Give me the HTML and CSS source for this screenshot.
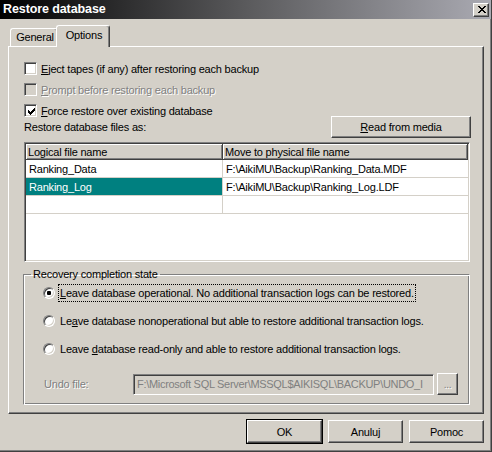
FILE: index.html
```html
<!DOCTYPE html>
<html>
<head>
<meta charset="utf-8">
<title>Restore database</title>
<link rel="stylesheet" href="styles.css">
</head>
<body>
<div class="window">
  <div class="titlebar">
    <span class="title">Restore database</span>
    <span class="close"><svg width="8" height="7" viewBox="0 0 8 7"><path d="M0 0h2v1H0zM6 0h2v1H6zM1 1h2v1H1zM5 1h2v1H5zM2 2h4v1H2zM3 3h2v1H3zM2 4h4v1H2zM1 5h2v1H1zM5 5h2v1H5zM0 6h2v1H0zM6 6h2v1H6z" fill="#000"/></svg></span>
  </div>
  <div class="tabs">
    <div class="tab">General</div>
    <div class="tab active">Options</div>
  </div>
  <div class="panel">
    <div class="check"><span class="box"></span><span><u>E</u>ject tapes (if any) after restoring each backup</span></div>
    <div class="check disabled"><span class="box"></span><span><u>P</u>rompt before restoring each backup</span></div>
    <div class="check"><span class="box"><svg width="7" height="7" viewBox="0 0 7 7"><path d="M6 0h1v1H6zM5 1h2v1H5zM0 2h1v1H0zM4 2h3v1H4zM0 3h2v1H0zM3 3h3v1H3zM0 4h5v1H0zM1 5h3v1H1zM2 6h1v1H2z" fill="#000"/></svg></span><span><u>F</u>orce restore over existing database</span></div>
    <div class="files-row">
      <span>Restore database files as:</span>
      <span class="btn read"><u>R</u>ead from media</span>
    </div>
    <div class="grid">
      <table>
        <colgroup><col class="c1"><col></colgroup>
        <tr><th>Logical file name</th><th>Move to physical file name</th></tr>
        <tr><td>Ranking_Data</td><td>F:\AikiMU\Backup\Ranking_Data.MDF</td></tr>
        <tr><td class="sel">Ranking_Log</td><td>F:\AikiMU\Backup\Ranking_Log.LDF</td></tr>
        <tr><td></td><td></td></tr>
      </table>
    </div>
    <fieldset class="group">
      <legend>Recovery completion state</legend>
      <div class="radio"><span class="dot on"><i></i></span><span class="focus"><u>L</u>eave database operational. No additional transaction logs can be restored.</span></div>
      <div class="radio"><span class="dot"></span><span>Le<u>a</u>ve database nonoperational but able to restore additional transaction logs.</span></div>
      <div class="radio"><span class="dot"></span><span>Leave <u>d</u>atabase read-only and able to restore additional transaction logs.</span></div>
      <div class="undo">
        <span class="undo-label">Undo file:</span>
        <span class="input"><span class="input-text">F:\Microsoft SQL Server\MSSQL$AIKISQL\BACKUP\UNDO_I</span></span>
        <span class="btn small">...</span>
      </div>
    </fieldset>
  </div>
  <div class="buttons">
    <span class="btn default">OK</span>
    <span class="btn">Anuluj</span>
    <span class="btn">Pomoc</span>
  </div>
</div>
</body>
</html>
```
FILE: styles.css
```css
* { box-sizing: border-box; }
html, body { margin: 0; padding: 0; }
body {
  width: 492px;
  height: 452px;
  overflow: hidden;
  background: #d4d0c8;
  font-family: "Liberation Sans", Arial, sans-serif;
  font-size: 11px;
  letter-spacing: -0.2px;
  color: #000;
}
.window {
  width: 492px;
  height: 452px;
  display: flex;
  flex-direction: column;
  border-right: 1px solid #404040;
  border-bottom: 1px solid #404040;
  box-shadow: inset -1px -1px #808080;
}
.titlebar {
  height: 19px;
  flex: none;
  display: flex;
  align-items: center;
  justify-content: space-between;
  background: linear-gradient(to right, #000 0%, #5a5a5c 50%, #aaaab2 100%);
  padding: 0 2px 0 3px;
}
.title {
  color: #fff;
  font-weight: bold;
  font-size: 12.5px;
  letter-spacing: -0.1px;
  line-height: 19px;
}
.close {
  width: 16px;
  height: 14px;
  display: flex;
  align-items: center;
  justify-content: center;
  background: #d4d0c8;
  border: 1px solid;
  border-color: #fff #404040 #404040 #fff;
  box-shadow: inset -1px -1px #808080;
  padding-left: 1px;
}
.tabs {
  height: 27px;
  flex: none;
  display: flex;
  align-items: flex-end;
  padding-left: 10px;
}
.tab {
  height: 18px;
  width: 48px;
  border: 1px solid;
  border-color: #fff #404040 transparent #fff;
  border-bottom: none;
  border-radius: 3px 3px 0 0;
  box-shadow: inset -1px 0 #808080;
  text-align: center;
  line-height: 17px;
  padding-left: 2px;
}
.tab.active {
  position: relative;
  z-index: 1;
  height: 22px;
  width: 54px;
  margin-left: -2px;
  margin-bottom: -1px;
  background: #d4d0c8;
  line-height: 18px;
}
.panel {
  margin-left: 8px;
  width: 476px;
  height: 368px;
  flex: none;
  border: 1px solid;
  border-color: #fff #404040 #404040 #fff;
  box-shadow: inset -1px -1px #808080;
  padding: 11px 12px 0 15px;
  display: flex;
  flex-direction: column;
}
.check {
  height: 21px;
  display: flex;
  align-items: center;
  gap: 4px;
}
.box {
  width: 13px;
  height: 13px;
  flex: none;
  background: #fff;
  border: 1px solid;
  border-color: #808080 #fff #fff #808080;
  box-shadow: inset 1px 1px #404040, inset -1px -1px #d4d0c8;
  display: flex;
  align-items: center;
  justify-content: center;
  padding: 1px 0 0 1px;
}
.disabled { color: #808080; text-shadow: 1px 1px 0 #fff; }
.disabled .box { background: #d4d0c8; }
.files-row {
  margin-top: -5px;
  height: 22px;
  display: flex;
  align-items: center;
  justify-content: space-between;
}
.btn {
  display: flex;
  align-items: center;
  justify-content: center;
  width: 75px;
  height: 23px;
  background: #d4d0c8;
  border: 1px solid;
  border-color: #fff #404040 #404040 #fff;
  box-shadow: inset -1px -1px #808080;
}
.btn.read { width: 140px; height: 22px; }
.btn.default { outline: 1px solid #000; }
.btn.small {
  width: 21px;
  height: 22px;
  margin-left: 3px;
  color: #808080;
  text-shadow: 1px 1px 0 #fff;
  align-items: flex-end;
  padding-bottom: 4px;
  font-size: 10px;
}
.grid {
  margin-top: 4px;
  width: 446px;
  height: 120px;
  flex: none;
  background: #fff;
  border: 1px solid;
  border-color: #808080 #fff #fff #808080;
  box-shadow: inset 1px 1px #404040, inset -1px -1px #d4d0c8;
  padding: 1px;
}
.grid table {
  width: 442px;
  border-collapse: separate;
  border-spacing: 0;
  table-layout: fixed;
}
.grid col.c1 { width: 197px; }
.grid th {
  height: 16px;
  padding: 0 0 0 2px;
  font-weight: normal;
  text-align: left;
  background: #d4d0c8;
  border-right: 1px solid #404040;
  border-bottom: 1px solid #404040;
  box-shadow: inset 1px 1px #fff, inset -1px -1px #808080;
  line-height: 14px;
  white-space: nowrap;
}
.grid td {
  height: 18px;
  padding: 0 0 0 3px;
  border-bottom: 1px solid #d4d0c8;
  line-height: 16px;
  white-space: nowrap;
}
.grid td:first-child { border-right: 1px solid #d4d0c8; }
.grid td.sel { background: #008080; color: #fff; }
.group {
  margin: 6px 0 0 -1px;
  width: 447px;
  height: 137px;
  padding: 0 0 0 19px;
  border: 1px solid #808080;
  border-right-color: #fff;
  border-bottom-color: #fff;
  box-shadow: inset 1px 1px #fff, inset -1px -1px #808080;
  min-inline-size: 0;
}
.group legend {
  margin-left: -12px;
  padding: 0 2px;
  line-height: 13px;
}
.radio {
  height: 16px;
  margin-top: 12px;
  display: flex;
  align-items: center;
  gap: 5px;
}
.radio:first-of-type { margin-top: 4px; }
.dot {
  width: 12px;
  height: 12px;
  flex: none;
  border-radius: 50%;
  background: #fff;
  border: 1px solid;
  border-color: #808080 #fff #fff #808080;
  box-shadow: inset 1px 1px #404040, inset -1px -1px #d4d0c8;
  display: flex;
  align-items: center;
  justify-content: center;
}
.dot i {
  display: block;
  width: 4px;
  height: 4px;
  border-radius: 1px;
  background: #000;
}
.focus {
  outline: 1px dotted #000;
  padding: 1px;
  margin-left: -1px;
  line-height: 14px;
}
.undo {
  margin-top: 16px;
  display: flex;
  align-items: center;
}
.undo-label {
  width: 89px;
  margin-left: 1px;
  color: #808080;
  text-shadow: 1px 1px 0 #fff;
}
.input {
  width: 301px;
  height: 21px;
  border: 1px solid;
  border-color: #808080 #fff #fff #808080;
  box-shadow: inset 1px 1px #404040, inset -1px -1px #d4d0c8;
  color: #808080;
  padding: 0 2px 0 3px;
  line-height: 19px;
  white-space: nowrap;
  overflow: hidden;
}
.input-text { letter-spacing: -0.3px; }
.buttons {
  margin-top: 6px;
  display: flex;
  justify-content: flex-end;
  gap: 6px;
  padding-right: 7px;
}
```
